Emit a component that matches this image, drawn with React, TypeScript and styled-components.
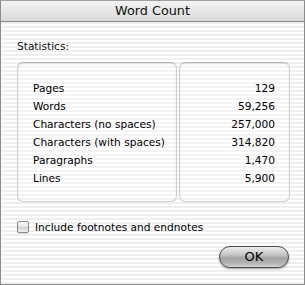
import * as React from "react"
import styled, { createGlobalStyle } from "styled-components"

const GlobalStyle = createGlobalStyle`
html, body {
    margin: 0;
    padding: 0;
    background: #fff;
}
`

const pinstripe = `repeating-linear-gradient(
    to bottom,
    #ffffff 0px,
    #ffffff 2px,
    #efefef 2px,
    #efefef 4px
)`

const Window = styled("div")`
box-sizing: border-box;
width: 305px;
height: 285px;
border: 1px solid #8c8c8c;
border-top: none;
background: ${pinstripe};
display: flex;
flex-direction: column;
font-family: "DejaVu Sans", Verdana, sans-serif;
font-size: 10.6px;
color: #000;
`

const TitleBar = styled("div")`
box-sizing: border-box;
height: 22px;
margin: 0 -1px;
border: 1px solid #8c8c8c;
border-top-color: #a0a0a0;
background: linear-gradient(to bottom, #f4f4f4 0%, #e6e6e6 50%, #d9d9d9 100%);
display: flex;
align-items: center;
justify-content: center;
font-size: 12.8px;
color: #111;
padding-bottom: 1px;
`

const Content = styled("div")`
flex: 1;
display: flex;
flex-direction: column;
padding: 17px 15px 0 15px;
`

const SectionLabel = styled("div")`
line-height: 14px;
padding-left: 1px;
margin-bottom: 9px;
color: #111;
`

const Panels = styled("div")`
display: flex;
gap: 2px;
margin-left: 1px;
width: 273px;
`

const Panel = styled("div")<{ $width?: number; $align: "left" | "right" }>`
box-sizing: border-box;
${p => p.$width ? `width: ${p.$width}px;` : "flex: 1;"}
height: 140px;
border: 1px solid #cfcfcf;
border-top-color: #b4b4b4;
border-radius: 6px;
background: rgba(255, 255, 255, 0.35);
box-shadow: inset 0 1px 2px rgba(0, 0, 0, 0.1);
padding: 16px ${p => p.$align === "right" ? "14px" : "0"} 0 ${p => p.$align === "left" ? "15px" : "0"};
text-align: ${p => p.$align};
`

const Row = styled("div")`
height: 18px;
line-height: 18px;
white-space: nowrap;
`

const CheckRow = styled("label")`
display: flex;
align-items: center;
gap: 6px;
margin-top: 18px;
margin-left: 1px;
height: 14px;
`

const CheckBox = styled("span")`
box-sizing: border-box;
width: 12px;
height: 12px;
border: 1px solid #8a8a8a;
border-radius: 2px;
background: linear-gradient(to bottom, #fdfdfd 0%, #e4e4e4 50%, #d2d2d2 55%, #f2f2f2 100%);
box-shadow: 0 1px 1px rgba(0, 0, 0, 0.15);
`

const ButtonRow = styled("div")`
display: flex;
justify-content: flex-end;
margin-top: 12px;
`

const Button = styled("button")`
box-sizing: border-box;
width: 70px;
height: 22px;
border: 1px solid #4e4e4e;
border-radius: 11px;
background: linear-gradient(to bottom, #ececec 0%, #c4c4c4 40%, #a4a4a4 55%, #b2b2b2 80%, #d4d4d4 100%);
box-shadow: 0 1px 2px rgba(0, 0, 0, 0.4);
font-family: "DejaVu Sans", Verdana, sans-serif;
font-size: 13px;
color: #000;
padding: 0;
line-height: 20px;
`

const stats: [string, string][] = [
    ["Pages", "129"],
    ["Words", "59,256"],
    ["Characters (no spaces)", "257,000"],
    ["Characters (with spaces)", "314,820"],
    ["Paragraphs", "1,470"],
    ["Lines", "5,900"],
]

export default function App() {
    return <>
        <GlobalStyle />
        <Window>
            <TitleBar>Word Count</TitleBar>
            <Content>
                <SectionLabel>Statistics:</SectionLabel>
                <Panels>
                    <Panel $width={160} $align="left">
                        {stats.map(([label]) => <Row key={label}>{label}</Row>)}
                    </Panel>
                    <Panel $align="right">
                        {stats.map(([label, value]) => <Row key={label}>{value}</Row>)}
                    </Panel>
                </Panels>
                <CheckRow>
                    <CheckBox />
                    Include footnotes and endnotes
                </CheckRow>
                <ButtonRow>
                    <Button>OK</Button>
                </ButtonRow>
            </Content>
        </Window>
    </>
}
